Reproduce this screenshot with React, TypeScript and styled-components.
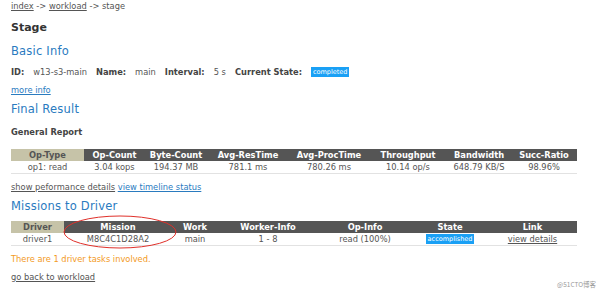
import React from 'react'
import styled, { createGlobalStyle } from 'styled-components'

const GlobalStyle = createGlobalStyle`
  html, body {
    margin: 0;
    padding: 0;
    background: #fff;
  }
  body {
    font-family: "DejaVu Sans", Verdana, sans-serif;
    font-size: 8.3px;
    color: #555;
  }
`

const Page = styled.div`
  position: relative;
  width: 600px;
  height: 292px;
  padding: 0 23px 0 11px;
  box-sizing: border-box;
  overflow: hidden;
`

const Line = styled.div<{ mt?: number }>`
  margin-top: ${({ mt }) => mt ?? 0}px;
  line-height: 12px;
  height: 12px;
  white-space: nowrap;
`

const Crumb = styled.a`
  color: #555;
  text-decoration: underline;
`

const Title = styled.h2`
  margin: 9px 0 0;
  font-size: 11px;
  line-height: 14px;
  font-weight: bold;
  color: #333;
`

const Heading = styled.h3<{ mt: number }>`
  margin: ${({ mt }) => mt}px 0 0;
  font-size: 11.5px;
  line-height: 14px;
  font-weight: normal;
  letter-spacing: 0.2px;
  color: #2a7bbf;
`

const SubHeading = styled.h4`
  margin: 10px 0 0;
  font-size: 8.3px;
  line-height: 12px;
  font-weight: bold;
  color: #444;
`

const Label = styled.b`
  color: #444;
  margin-right: 9px;
`

const Value = styled.span`
  margin-right: 9px;
`

const Badge = styled.span`
  display: inline-block;
  background: #1aa0f5;
  color: #fff;
  font-size: 6.5px;
  line-height: 10px;
  padding: 0 2px;
  vertical-align: 1px;
`

const BlueLink = styled.a`
  color: #2a7bbf;
  text-decoration: underline;
`

const GrayLink = styled.a`
  color: #555;
  text-decoration: underline;
`

const TableWrap = styled.div<{ mt: number }>`
  position: relative;
  margin-top: ${({ mt }) => mt}px;
`

const Table = styled.table`
  width: 566px;
  border-collapse: collapse;
  table-layout: fixed;
`

const Th = styled.th<{ first?: boolean }>`
  background: ${({ first }) => (first ? '#c6c3a8' : '#555')};
  color: ${({ first }) => (first ? '#555' : '#fff')};
  font-weight: bold;
  height: 12px;
  line-height: 12px;
  padding: 0;
  text-align: center;
  white-space: nowrap;
`

const Td = styled.td`
  height: 12px;
  line-height: 12px;
  padding: 0;
  text-align: center;
  border-bottom: 1px solid #e2e2e2;
  white-space: nowrap;
`

const Note = styled(Line)`
  color: #f39a1e;
`

const Ellipse = styled.svg`
  position: absolute;
  left: 51px;
  top: -6px;
  overflow: visible;
`

const Watermark = styled.div`
  position: absolute;
  right: 4px;
  bottom: 3px;
  font-family: "Noto Sans CJK SC", "DejaVu Sans", sans-serif;
  font-size: 6.5px;
  color: #9a9a9a;
`

const reportCols = [73, 61, 62, 82, 80, 78, 64, 66]
const reportHead = ['Op-Type', 'Op-Count', 'Byte-Count', 'Avg-ResTime', 'Avg-ProcTime', 'Throughput', 'Bandwidth', 'Succ-Ratio']
const reportRow = ['op1: read', '3.04 kops', '194.37 MB', '781.1 ms', '780.26 ms', '10.14 op/s', '648.79 KB/S', '98.96%']

const missionCols = [53, 108, 46, 100, 94, 76, 89]
const missionHead = ['Driver', 'Mission', 'Work', 'Worker-Info', 'Op-Info', 'State', 'Link']

export default function App() {
  return (
    <Page>
      <GlobalStyle />
      <Line>
        <Crumb>index</Crumb> -&gt; <Crumb>workload</Crumb> -&gt; stage
      </Line>
      <Title>Stage</Title>
      <Heading mt={9}>Basic Info</Heading>
      <Line mt={8}>
        <Label>ID:</Label>
        <Value>w13-s3-main</Value>
        <Label>Name:</Label>
        <Value>main</Value>
        <Label>Interval:</Label>
        <Value>5 s</Value>
        <Label>Current State:</Label>
        <Badge>completed</Badge>
      </Line>
      <Line mt={6}>
        <BlueLink>more info</BlueLink>
      </Line>
      <Heading mt={6}>Final Result</Heading>
      <SubHeading>General Report</SubHeading>
      <TableWrap mt={11}>
        <Table>
          <colgroup>
            {reportCols.map((w, i) => (
              <col key={i} style={{ width: w }} />
            ))}
          </colgroup>
          <thead>
            <tr>
              {reportHead.map((h, i) => (
                <Th key={h} first={i === 0}>{h}</Th>
              ))}
            </tr>
          </thead>
          <tbody>
            <tr>
              {reportRow.map((c) => (
                <Td key={c}>{c}</Td>
              ))}
            </tr>
          </tbody>
        </Table>
      </TableWrap>
      <Line mt={7}>
        <GrayLink>show peformance details</GrayLink> <BlueLink>view timeline status</BlueLink>
      </Line>
      <Heading mt={6}>Missions to Driver</Heading>
      <TableWrap mt={8}>
        <Table>
          <colgroup>
            {missionCols.map((w, i) => (
              <col key={i} style={{ width: w }} />
            ))}
          </colgroup>
          <thead>
            <tr>
              {missionHead.map((h, i) => (
                <Th key={h} first={i === 0}>{h}</Th>
              ))}
            </tr>
          </thead>
          <tbody>
            <tr>
              <Td>driver1</Td>
              <Td>M8C4C1D28A2</Td>
              <Td>main</Td>
              <Td>1 - 8</Td>
              <Td>read (100%)</Td>
              <Td>
                <Badge>accomplished</Badge>
              </Td>
              <Td>
                <GrayLink>view details</GrayLink>
              </Td>
            </tr>
          </tbody>
        </Table>
        <Ellipse width="116" height="34">
          <ellipse cx="58" cy="17" rx="56" ry="16" fill="none" stroke="#e0302a" strokeWidth="1" />
        </Ellipse>
      </TableWrap>
      <Note mt={7}>There are 1 driver tasks involved.</Note>
      <Line mt={6}>
        <GrayLink>go back to workload</GrayLink>
      </Line>
      <Watermark>@51CTO博客</Watermark>
    </Page>
  )
}
